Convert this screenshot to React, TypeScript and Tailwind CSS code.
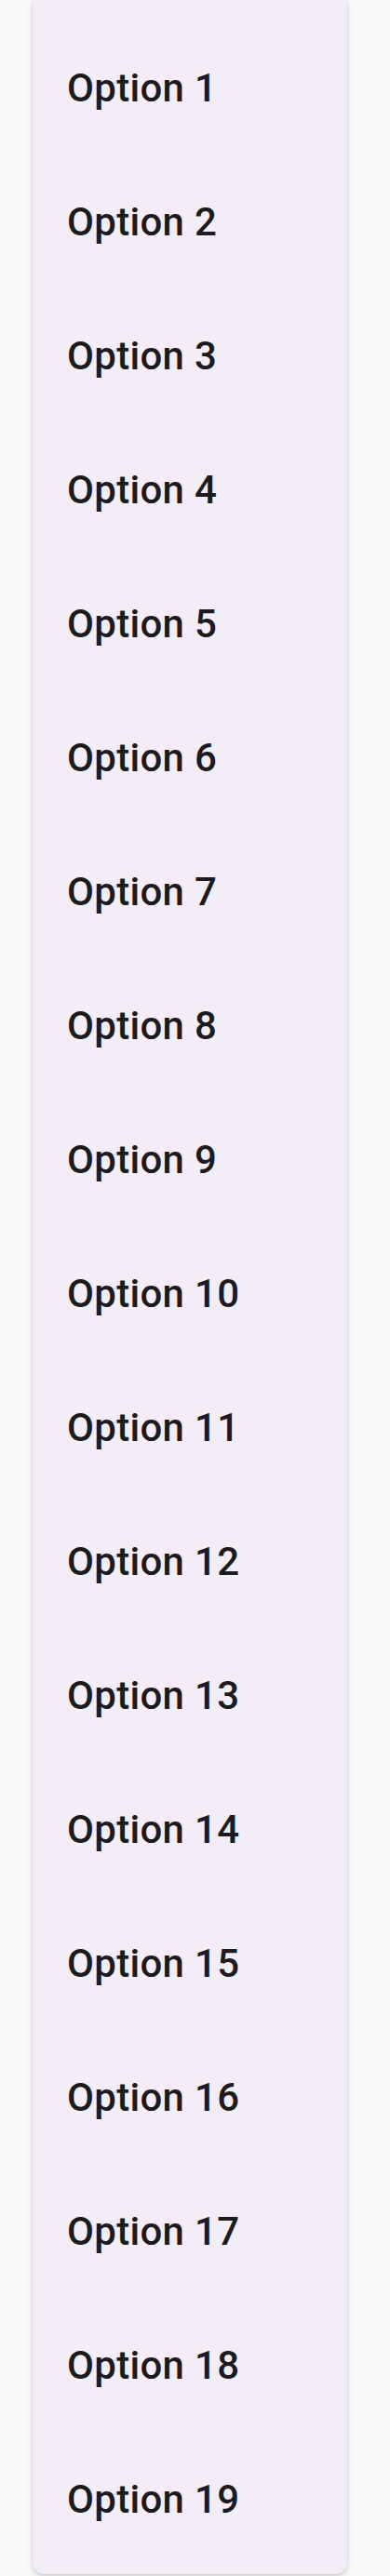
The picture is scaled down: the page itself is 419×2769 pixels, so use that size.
import React from "react";

export default function App() {
  const items = Array.from({ length: 19 }, (_, i) => `Option ${i + 1}`);
  return (
    <div className="w-[419px] h-[2769px] bg-[#f9f9f9] overflow-hidden pl-[35px]">
      <div className="w-[338px] bg-[#f3edf7] rounded-b-[12px] pt-[23px] pb-[8px] shadow-[0_3px_6px_rgba(0,0,0,0.12),0_1px_3px_rgba(0,0,0,0.1)]">
        {items.map((t) => (
          <div key={t} className="h-[144px] flex items-center pl-[37px]">
            <span
              className="text-[42px] leading-none font-medium text-[#1d1b20] tracking-[0.3px]"
              style={{ fontFamily: "Roboto, 'Noto Sans', sans-serif" }}
            >
              {t}
            </span>
          </div>
        ))}
      </div>
    </div>
  );
}
